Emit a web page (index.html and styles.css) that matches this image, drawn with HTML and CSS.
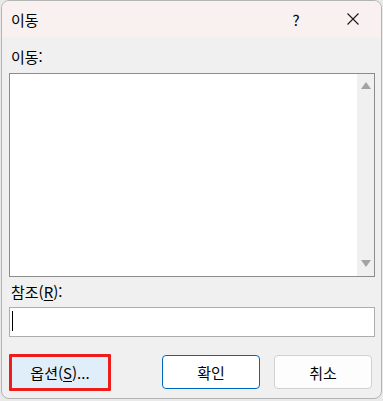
FILE: index.html
```html
<!DOCTYPE html>
<html lang="ko">
<head>
    <meta charset="UTF-8">
    <meta name="viewport" content="width=device-width, initial-scale=1.0">
    <title>이동</title>
    <link rel="stylesheet" href="styles.css">
</head>
<body>
    <div class="window">
        <div class="titlebar">
            <span class="title">이동</span>
            <span class="help">?</span>
            <span class="close">
                <svg width="12" height="12" viewBox="0 0 12 12">
                    <path d="M0.5 0.5 L11.5 11.5 M11.5 0.5 L0.5 11.5" stroke="#1a1a1a" stroke-width="1.1" fill="none"/>
                </svg>
            </span>
        </div>

        <div class="content">
            <label class="label">이동:</label>
            <div class="listbox">
                <div class="list-area"></div>
                <div class="scrollbar">
                    <span class="arrow up"></span>
                    <span class="arrow down"></span>
                </div>
            </div>

            <label class="label ref-label">참조(<u>R</u>):</label>
            <div class="textbox"><span class="caret"></span></div>

            <div class="buttons">
                <button class="btn options-btn">옵션(<u>S</u>)...</button>
                <div class="right-buttons">
                    <button class="btn ok-btn">확인</button>
                    <button class="btn">취소</button>
                </div>
            </div>
        </div>
    </div>
</body>
</html>
```

FILE: styles.css
```css
:root {
    --title-bg: #f9f1ef;
    --body-bg: #f0f0f0;
    --text-color: #000;
    --accent-blue: #0067c0;
}

* {
    margin: 0;
    padding: 0;
    box-sizing: border-box;
    font-family: "Noto Sans CJK KR", "Noto Sans", sans-serif;
}

body {
    background-color: #e9e9e9;
    width: 383px;
    height: 401px;
    overflow: hidden;
}

.window {
    margin-left: 1px;
    width: 381px;
    height: 399px;
    border: 1px solid #b4b4b4;
    border-radius: 8px;
    overflow: hidden;
    background-color: var(--body-bg);
}

.titlebar {
    height: 36px;
    background-color: var(--title-bg);
    display: flex;
    align-items: center;
    padding-left: 9px;
    color: var(--text-color);
}

.title {
    font-size: 15px;
    flex: 1;
}

.help {
    font-size: 15px;
    width: 24px;
    margin-right: 39px;
    text-align: center;
}

.close {
    display: flex;
    width: 12px;
    margin-right: 22px;
}

.content {
    padding: 10px 6px 0 7px;
}

.label {
    display: block;
    font-size: 15px;
    line-height: 20px;
    color: var(--text-color);
    padding-left: 2px;
}

.listbox {
    margin-top: 6px;
    height: 204px;
    border: 1px solid #8c8c8c;
    display: flex;
    background: white;
}

.list-area {
    flex: 1;
}

.scrollbar {
    width: 17px;
    background-color: var(--body-bg);
    display: flex;
    flex-direction: column;
    justify-content: space-between;
    align-items: center;
    padding: 8px 0 9px;
}

.arrow {
    width: 0;
    height: 0;
    border-left: 5px solid transparent;
    border-right: 5px solid transparent;
}

.arrow.up {
    border-bottom: 7px solid #a3a3a3;
}

.arrow.down {
    border-top: 7px solid #a3a3a3;
}

.ref-label {
    margin-top: 5px;
}

.textbox {
    margin-top: 5px;
    height: 30px;
    border: 1px solid #adadad;
    background: white;
    padding: 3px 0 0 2px;
}

.caret {
    display: block;
    width: 1px;
    height: 20px;
    background: black;
}

.buttons {
    margin-top: 18px;
    display: flex;
    justify-content: space-between;
}

.right-buttons {
    display: flex;
    gap: 14px;
    padding-right: 3px;
}

.btn {
    width: 98px;
    height: 34px;
    border: 1px solid #d0d0d0;
    border-radius: 4px;
    background-color: #fdfdfd;
    font-size: 15px;
    color: var(--text-color);
}

.options-btn {
    width: 102px;
    height: 37px;
    margin-top: -1px;
    border: 3px solid #ef1c1c;
    border-radius: 1px;
    background-color: #e0eef9;
}

.ok-btn {
    border-color: var(--accent-blue);
    background-color: white;
}

u {
    text-underline-offset: 2px;
}
```
